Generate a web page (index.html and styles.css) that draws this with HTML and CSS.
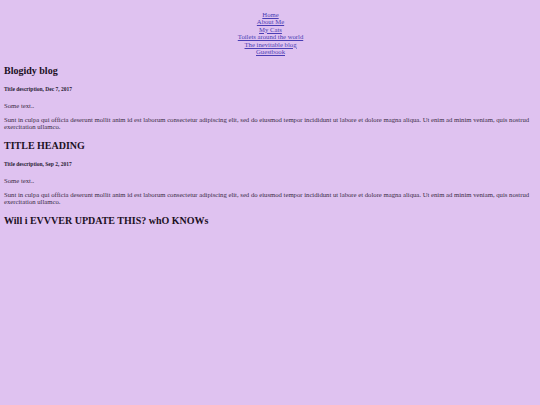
FILE: index.html
```html
<!DOCTYPE html>
<html>
<head>
<meta charset="utf-8">
<link rel="stylesheet" href="styles.css">
</head>
<body>
<nav class="nav">
  <a href="#">Home</a>
  <a href="#">About Me</a>
  <a href="#">My Cats</a>
  <a href="#">Toilets around the world</a>
  <a href="#">The inevitable blog</a>
  <a href="#">Guestbook</a>
</nav>
<main class="content">
  <h2 class="title">Blogidy blog</h2>
  <h5 class="desc">Title description, Dec 7, 2017</h5>
  <p class="text">Some text..</p>
  <p class="text">Sunt in culpa qui officia deserunt mollit anim id est laborum consectetur adipiscing elit, sed do eiusmod tempor incididunt ut labore et dolore magna aliqua. Ut enim ad minim veniam, quis nostrud exercitation ullamco.</p>
  <h2 class="title">TITLE HEADING</h2>
  <h5 class="desc">Title description, Sep 2, 2017</h5>
  <p class="text">Some text..</p>
  <p class="text">Sunt in culpa qui officia deserunt mollit anim id est laborum consectetur adipiscing elit, sed do eiusmod tempor incididunt ut labore et dolore magna aliqua. Ut enim ad minim veniam, quis nostrud exercitation ullamco.</p>
  <h2 class="title">Will i EVVVER UPDATE THIS? whO KNOWs</h2>
</main>
</body>
</html>
```
FILE: styles.css
```css
html, body {
  background: #dfc2f0;
}
body {
  margin: 0;
  padding: 10.5px 3px 0 4px;
  font-family: "Liberation Serif", serif;
  font-size: 6.7px;
  line-height: 7.6px;
  color: #3a2c46;
}
.nav {
  display: flex;
  flex-direction: column;
  align-items: center;
}
.nav a {
  color: #4a3eb4;
  text-decoration: underline;
}
.content {
  display: flow-root;
}
.title {
  font-size: 10px;
  line-height: 12px;
  margin: 8.6px 0 9.5px;
  color: #1c1024;
}
.desc {
  font-size: 5.5px;
  line-height: 6px;
  margin: 0 0 9.7px;
  color: #2a1d35;
}
.text {
  margin: 0 0 6.4px;
}
```
